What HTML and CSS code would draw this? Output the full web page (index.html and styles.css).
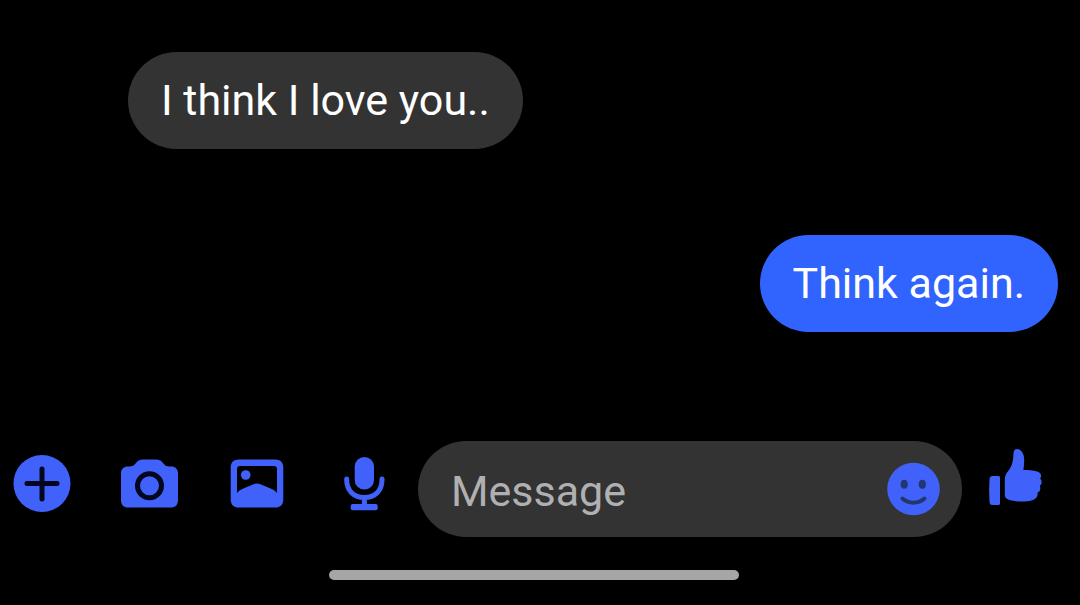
FILE: index.html
```html
<!DOCTYPE html>
<html lang="en">
<head>
<meta charset="utf-8">
<meta name="viewport" content="width=device-width, initial-scale=1">
<title>Chat</title>
<link rel="stylesheet" href="styles.css">
</head>
<body>
<main class="chat">
  <div class="messages">
    <p class="bubble received">I think I love you..</p>
    <p class="bubble sent">Think again.</p>
  </div>
  <form class="composer">
    <div class="tools">
      <button class="icon-button" type="button" aria-label="More actions">
        <svg class="icon" viewBox="0 0 60 60"><circle cx="30" cy="29.500" r="28.500"/><path class="cut" d="M30 15v30M15 29.500h30"/></svg>
      </button>
      <button class="icon-button" type="button" aria-label="Camera">
        <svg class="icon" viewBox="0 0 60 60"><path d="M8 12.500c5 0 6-1 8-3.500 2-2.600 4-3.500 7-3.500h13c3 0 5 .9 7 3.500 2 2.500 3 3.500 8 3.500 4.500 0 7 2.700 7 7V46c0 5-2.500 7.500-7.500 7.500h-42C3.500 53.500 1 51 1 46V19.500c0-4.300 2.500-7 7-7z"/><circle class="cut" cx="29.500" cy="31.700" r="12"/></svg>
      </button>
      <button class="icon-button" type="button" aria-label="Gallery">
        <svg class="icon" viewBox="0 0 60 60"><path fill-rule="evenodd" d="M11 5.500h36c5.500 0 8.300 2.800 8.300 8.300v31.400c0 5.500-2.800 8.300-8.300 8.300H11c-5.500 0-8.300-2.800-8.300-8.300V13.800c0-5.500 2.800-8.300 8.300-8.300zM12 12c-2 0-3 1-3 3v24c2-2.500 4.500-3.600 7.500-5l8.500-3.600c2.700-1.200 5.300-1.200 8 0l8.500 3.600c3 1.400 5.500 2.500 7.500 5V15c0-2-1-3-3-3z"/><circle cx="17.700" cy="21" r="4.800"/></svg>
      </button>
      <button class="icon-button" type="button" aria-label="Voice message">
        <svg class="icon" viewBox="0 0 60 60"><rect x="18.700" y="3" width="19.300" height="32.500" rx="9.600"/><path class="line" d="M10.700 25v1c0 10.500 7 17.500 17.700 17.500S46 36.500 46 26v-1M28.400 43.500v8"/><rect x="14.700" y="50" width="27" height="6.200" rx="2"/></svg>
      </button>
    </div>
    <div class="field">
      <input class="field-input" type="text" placeholder="Message" aria-label="Message">
      <button class="icon-button" type="button" aria-label="Emoji">
        <svg class="icon" viewBox="0 0 60 60"><circle cx="29.500" cy="30" r="26.300"/><ellipse class="face" cx="20.200" cy="25.200" rx="3.600" ry="4.500"/><ellipse class="face" cx="38.300" cy="25.200" rx="3.600" ry="4.500"/><path class="smile" d="M18.500 39.500c6 5.500 16 5.500 22 0"/></svg>
      </button>
    </div>
    <button class="icon-button like" type="button" aria-label="Like">
      <svg class="icon" viewBox="0 0 60 60"><path d="M6.500 28h5.500c1.500 0 2 .5 2 2v25c0 1.500-.5 2-2 2H6.500c-2 0-3-1-3-4-.5-7-.5-14 0-21 0-3 1-4 3-4z"/><path d="M27.500 5c.3-2.700 1.500-4 3.500-4 4.500 0 7.200 5 7.200 11 0 4-.4 7-.8 10 4.500 0 10 .3 13.800 1.400 3.800 1 5 4.600 2.900 7.100 2.200 2.400 2 5.600-.4 7.300 1.300 2.800.5 5.500-2.100 6.700.4 3.500-1.300 6.300-4.600 7.500-6.500 2.200-17 1.900-23.500.1-3.400-1-4.700-2.600-4.700-6V32c0-3.700 1-6.300 3.400-9 4-4.700 5-10 5.300-18z"/></svg>
    </button>
  </form>
  <div class="home-bar"></div>
</main>
</body>
</html>
```
FILE: styles.css
```css
* {
  box-sizing: border-box;
}

body {
  margin: 0;
  background: #000;
  color: #fff;
  font-family: Roboto, "Liberation Sans", sans-serif;
  font-size: 43px;
  line-height: 52px;
}

.chat {
  display: flex;
  flex-direction: column;
  min-height: 100vh;
  padding: 52px 0 25px;
}

.messages {
  display: flex;
  flex: 1;
  flex-direction: column;
  gap: 86px;
  padding: 0 22px 0 128px;
}

.bubble {
  margin: 0;
  padding: 22px 33px 23px;
  border-radius: 49px;
}

.received {
  align-self: flex-start;
  background: #333;
}

.sent {
  align-self: flex-end;
  background: #3164ff;
}

.composer {
  display: flex;
  align-items: center;
  padding: 0 34px 0 12px;
}

.tools {
  display: flex;
  gap: 48px;
  padding-bottom: 10px;
}

.icon-button {
  flex: none;
  padding: 0;
  border: 0;
  background: none;
  cursor: pointer;
}

.icon {
  display: block;
  width: 60px;
  height: 60px;
  fill: #4162fa;
}

.cut {
  fill: none;
  stroke: #03061f;
  stroke-width: 5;
  stroke-linecap: round;
}

.line {
  fill: none;
  stroke: #4162fa;
  stroke-width: 5;
  stroke-linecap: round;
}

.face {
  fill: #20376f;
}

.smile {
  fill: none;
  stroke: #20376f;
  stroke-width: 4;
  stroke-linecap: round;
}

.field {
  display: flex;
  flex: 1;
  align-items: center;
  min-width: 0;
  height: 96px;
  margin: 0 24px 0 22px;
  padding: 0 18px 0 33px;
  border-radius: 48px;
  background: #333;
}

.field-input {
  flex: 1;
  min-width: 0;
  padding: 4px 0 0;
  border: 0;
  outline: 0;
  background: none;
  color: #fff;
  font: inherit;
}

.field-input::placeholder {
  color: #b0b0b2;
  opacity: 1;
}

.like {
  padding-bottom: 22px;
}

.home-bar {
  align-self: center;
  width: 38%;
  height: 10px;
  margin: 33px 12px 0 0;
  border-radius: 5px;
  background: #a6a6a6;
}
```
